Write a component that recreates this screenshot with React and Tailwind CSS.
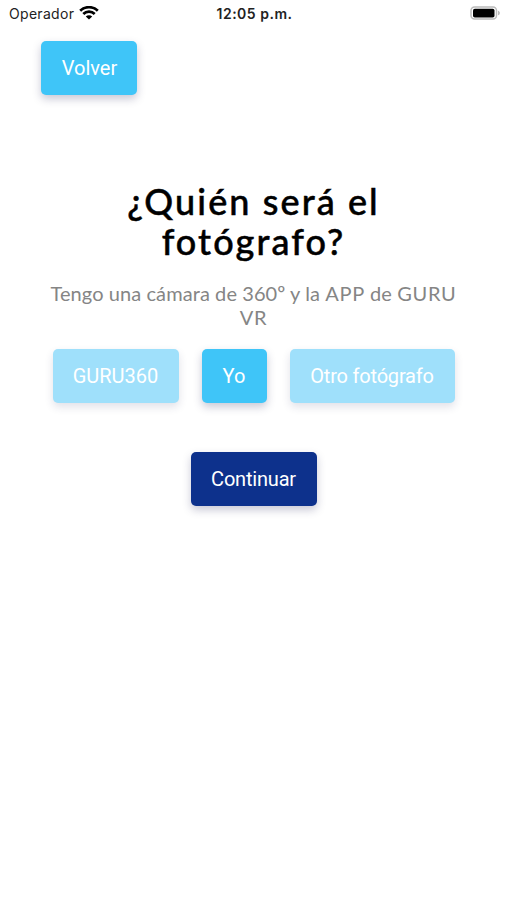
function Button({ className, children }) {
  return (
    <button className={`flex h-[54px] shrink-0 items-center justify-center rounded-[5px] font-[Roboto,sans-serif] text-[20px] text-white ${className}`}>
      {children}
    </button>
  );
}

function StatusBar() {
  return (
    <header className="grid h-[28px] grid-cols-3 items-center pl-[9px] pr-[7px] pb-[2px] font-[Inter,sans-serif] text-[14px] text-[#222]">
      <div className="flex items-center gap-[5px]">
        <span className="tracking-[0.3px]">Operador</span>
        <svg width="20" height="14" viewBox="0 0 20 14" fill="none" stroke="black" strokeWidth="2.7">
          <path d="M1.2 4.8a12.5 12.5 0 0 1 17.6 0" />
          <path d="M4.3 8a8 8 0 0 1 11.4 0" />
          <path d="M10 13.6 6.8 10.5a4.5 4.5 0 0 1 6.4 0Z" fill="black" stroke="none" />
        </svg>
      </div>
      <span className="text-center font-semibold tracking-[0.5px] whitespace-nowrap">12:05 p.m.</span>
      <svg className="justify-self-end" width="30" height="14" viewBox="0 0 30 14">
        <rect x="1" y="1" width="25.5" height="12" rx="3.5" fill="none" stroke="#bbb" strokeWidth="1.5" />
        <rect x="3" y="2.7" width="21.5" height="8.8" rx="1.8" fill="#000" />
        <path d="M28 4.7c2.5.7 2.5 3.9 0 4.6Z" fill="#bbb" />
      </svg>
    </header>
  );
}

export default function App() {
  return (
    <div className="h-[900px] w-full overflow-hidden bg-white">
      <StatusBar />
      <main className="flex flex-col pt-[13px]">
        <Button className="ml-[41px] w-[96px] bg-[#3fc5f8] pl-[1px] shadow-[0_4px_8px_rgba(40,40,90,0.25)]">Volver</Button>
        <h1 className="mt-[86px] text-center font-[Lato,sans-serif] text-[36px] leading-[40px] font-medium tracking-[2.1px] text-black [-webkit-text-stroke:0.5px_black]">
          ¿Quién será el<br />fotógrafo?
        </h1>
        <p className="mt-[20px] text-center font-[Lato,sans-serif] text-[20px] leading-[24px] tracking-[0.08px] text-[#858585]">
          Tengo una cámara de 360º y la <span className="tracking-[0.7px]">APP</span> de <span className="tracking-[0.7px]">GURU</span><br />
          <span className="tracking-[0.7px]">VR</span>
        </p>
        <div className="mt-[20px] flex justify-center gap-[23px]">
          <Button className="w-[126px] bg-[#9fe0fb] shadow-[0_4px_8px_rgba(40,40,90,0.14)]">GURU360</Button>
          <Button className="w-[65px] bg-[#3fc5f8] shadow-[0_4px_8px_rgba(40,40,90,0.25)]">Yo</Button>
          <Button className="w-[165px] bg-[#9fe0fb] tracking-[-0.2px] shadow-[0_4px_8px_rgba(40,40,90,0.14)]">Otro fotógrafo</Button>
        </div>
        <Button className="mt-[49px] w-[126px] self-center bg-[#0d318c] tracking-[-0.2px] shadow-[0_4px_8px_rgba(40,40,90,0.25)]">Continuar</Button>
      </main>
    </div>
  );
}
